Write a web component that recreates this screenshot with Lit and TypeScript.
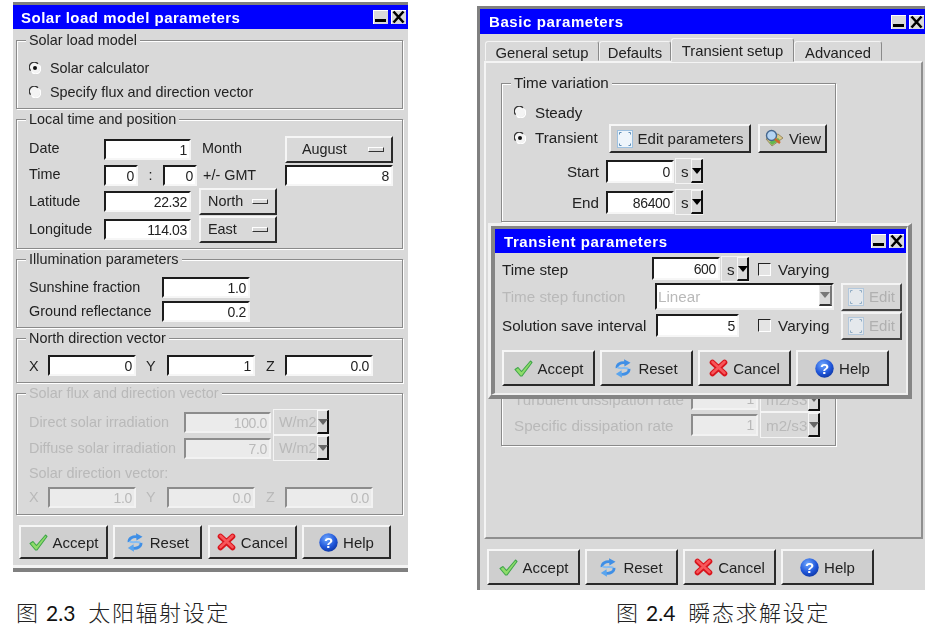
import { LitElement, html, svg, css } from "lit";
import { customElement } from "lit/decorators.js";

const checkIcon = html`<svg class="ico" width="19" height="17" viewBox="0 0 19 17"><path d="M1 9.5 L4 7.5 L7.5 11.5 L16.5 1 L18 2.5 L8 16 L6.5 16 Z" fill="#8fdc6a" stroke="#3fa64a" stroke-width="1.1" stroke-linejoin="round"/></svg>`;
const resetIcon = html`<svg class="ico rs" width="16" height="19" viewBox="0 0 16 19"><g fill="none" stroke-width="2.8"><path d="M2 9 C1.6 5 6 3.2 10 3.8" stroke="#3f8fe6"/><path d="M2.4 8.2 C5 10.4 11 7.8 13.6 10" stroke="#86bdf2" stroke-width="2"/><path d="M14 10 C14.4 14 10 15.8 6 15.2" stroke="#3f8fe6"/></g><path d="M9 0.3 L15.5 3.8 L9.5 7.6 Z" fill="#3f8fe6"/><path d="M7 18.7 L0.8 15 L6.5 11.2 Z" fill="#5aa5ee"/></svg>`;
const cancelIcon = html`<svg class="ico" width="19" height="18" viewBox="0 0 19 18"><g stroke-linecap="round"><path d="M3.5 3.5 L15.5 14.5 M15.5 3.5 L3.5 14.5" stroke="#d8141c" stroke-width="5.6"/><path d="M3.5 3 L15.5 14 M15.5 3 L3.5 14" stroke="#f8565a" stroke-width="2.6"/></g></svg>`;
const helpIcon = html`<svg class="ico" width="19" height="19" viewBox="0 0 19 19"><defs><radialGradient id="hb" cx=".4" cy=".3" r=".8"><stop offset="0" stop-color="#6fa8ff"/><stop offset=".6" stop-color="#1f55d8"/><stop offset="1" stop-color="#0a2f96"/></radialGradient></defs><circle cx="9.5" cy="9.5" r="9.2" fill="url(#hb)"/><text x="9.5" y="15" text-anchor="middle" font-family="Liberation Sans, sans-serif" font-weight="700" font-size="15" fill="#fff">?</text></svg>`;
const pageIcon = html`<svg class="ico" width="16" height="18" viewBox="0 0 16 18"><rect x=".5" y=".5" width="15" height="17" fill="#eef5fb" stroke="#9cc0e0"/><path d="M2.5 2.5h2M2.5 2.5v2M13.5 2.5h-2M13.5 2.5v2M2.5 15.5h2M2.5 15.5v-2M13.5 15.5h-2M13.5 15.5v-2" stroke="#5f8fb8" fill="none"/></svg>`;
const viewIcon = html`<svg class="ico" width="20" height="19" viewBox="0 0 20 19"><path d="M2 10 L14 5 L19 9 L8 17 Z" fill="#d9c88a" stroke="#8a7a50" stroke-width=".8"/><path d="M5 13 L14 9 L16 11 L8 16 Z" fill="#63b84f"/><circle cx="7.5" cy="6.5" r="5" fill="#b5d4f2" stroke="#46688f" stroke-width="1.4"/><path d="M11 10 L16 14" stroke="#d0692a" stroke-width="2.4"/></svg>`;

const radio = (on: boolean) => html`<svg class="radio" width="12" height="12" viewBox="0 0 12 12"><circle cx="6" cy="6" r="5.2" fill="#f4f4f4"/><path d="M1.6 8.6 A5 5 0 0 1 9 1.8" fill="none" stroke="#333" stroke-width="1.3"/><path d="M10.4 3.4 A5 5 0 0 1 3 10.2" fill="none" stroke="#fff" stroke-width="1.3"/>${on ? svg`<circle cx="6" cy="6" r="2" fill="#111"/>` : ""}</svg>`;
const winBtns = html`<div class="ctl"><span class="cb"><svg width="15" height="14" viewBox="0 0 15 14"><rect x="2" y="9" width="11" height="3" fill="#000"/></svg></span><span class="cb"><svg width="15" height="14" viewBox="0 0 15 14"><path d="M2.5 1.5 L12.5 12.5 M12.5 1.5 L2.5 12.5" stroke="#000" stroke-width="2.6"/></svg></span></div>`;
const actionBtns = html`
  <button class="btn">${checkIcon}<span>Accept</span></button>
  <button class="btn">${resetIcon}<span>Reset</span></button>
  <button class="btn">${cancelIcon}<span>Cancel</span></button>
  <button class="btn">${helpIcon}<span>Help</span></button>`;
const opt = (t: string, cls = "") => html`<button class="opt ${cls}"><span>${t}</span><i class="ind"></i></button>`;
const dd = (t: string, cls = "") => html`<div class="dd ${cls}"><span class="ddt">${t}</span><span class="dda"><i></i></span></div>`;
const check = () => html`<div class="chk"><i></i><span>Varying</span></div>`;

@customElement("app-root")
export class AppRoot extends LitElement {
  static styles = css`
    :host { display: block; position: relative; width: 937px; height: 631px; background: #fff; overflow: hidden;
      font: 15px "Liberation Sans", Arial, sans-serif; color: #222; }
    * { box-sizing: border-box; }
    .win { position: absolute; background: #d9d9d9; filter: blur(.35px); }
    .left { left: 13px; top: 2px; width: 395px; height: 570px; border-top: 3px solid #808080; border-bottom: 4px solid #808080; font-size: 14.4px; }
    .left .body { height: 539px; padding: 11px 0 0 3px; border-bottom: 3px solid #f4f4f4; }
    .right { left: 477px; top: 6px; width: 448px; height: 584px; border-top: 3px solid #808080; border-left: 3px solid #808080; font-size: 15.2px; }
    .title { height: 24px; background: #0000ff; color: #fff; font-weight: 700; font-size: 15px; letter-spacing: .5px; display: flex; align-items: center; justify-content: space-between; padding-left: 8px; }
    .right > .title { height: 25px; padding-left: 9px; letter-spacing: .6px; }
    .ctl { display: flex; gap: 3px; padding-right: 2px; }
    .right > .title .ctl { padding-right: 1px; }
    .cb { width: 15px; height: 14px; background: #d9d9d9; display: block; box-shadow: inset 1px 1px 0 #fff; line-height: 0; }
    .cb svg { display: block; }
    .group { position: relative; width: 387px; margin-bottom: 10px; border: 1px solid #8a8a8a; box-shadow: 1px 1px 0 #fff, inset 1px 1px 0 #fff; padding: 15px 0 0 12px; }
    .legend { position: absolute; top: -10px; left: 9px; padding: 0 3px; background: #d9d9d9; line-height: 18px; white-space: nowrap; }
    .g1 { height: 69px; }
    .g2 { height: 130px; }
    .g3 { height: 69px; }
    .g4 { height: 45px; padding-top: 16px; }
    .g5 { height: 122px; }
    .off { color: #b9b9b9; }
    .row { display: flex; align-items: center; gap: 9px; height: 24px; white-space: nowrap; }
    .grid { display: grid; align-items: center; white-space: nowrap; }
    .g2 .grid { grid-template-columns: 74.5px 34.5px 25px 34px 2px 78px 8px 108px; grid-template-rows: 28px 24px 28px 28px; }
    .g3 .grid { grid-template-columns: 133px 88px; grid-template-rows: 24px 24px; }
    .xyz { grid-template-columns: 19px 88px 31px 88px 30px 88px; }
    .g5 .top { grid-template-columns: 155px 87px 2px 57px; grid-template-rows: 26px 26px; }
    .g5 .lbl { height: 24px; line-height: 24px; }
    .g5 .xyz { height: 24px; }
    .s3 { grid-column: span 3; }
    .s2 { grid-column: span 2; }
    .s3 .in { width: 87.5px; }
    .colon { text-align: center; }
    .pl5 { padding-left: 5px; }
    .pl6 { padding-left: 6px; }
    .pl10 { padding-left: 10px; }
    .pl11 { padding-left: 11px; }
    .up { position: relative; top: -1px; }
    .in { height: 21px; background: #fff; border: 2px solid; border-color: #1c1c1c #f6f6f6 #f6f6f6 #1c1c1c; text-align: right; padding-right: 2px; line-height: 18px; font-size: 14px; letter-spacing: -.35px; }
    .in.dis { background: #ebebeb; color: #b9b9b9; border-color: #8c8c8c #f2f2f2 #f2f2f2 #8c8c8c; }
    .opt, .btn { font: inherit; color: inherit; background: #d0d0d0; border: 2px solid; border-color: #f6f6f6 #2a2a2a #2a2a2a #f6f6f6; padding: 0; display: flex; align-items: center; white-space: nowrap; }
    .opt { height: 27px; width: 100%; justify-content: space-between; padding: 0 7px 0 7px; background: #d9d9d9; }
    .opt.wide { padding-left: 15px; height: 27px; }
    .ind { width: 16px; height: 5px; background: #d9d9d9; border: 1px solid; border-color: #fff #333 #333 #fff; display: block; }
    .btn { height: 34px; width: 89px; justify-content: center; gap: 5px; background: #cfcfcf; font-size: 15px; }
    .actions { display: flex; gap: 5.33px; margin: 9px 0 0 3px; }
    .ico { display: block; flex: none; }
    .rs { margin-right: 2px; }
    .radio { display: block; flex: none; }
    .dd { display: flex; height: 26px; background: #d9d9d9; border: 1px solid; border-color: #f4f4f4 transparent #f4f4f4 #f4f4f4; align-items: center; }
    .ddt { flex: 1; padding-left: 5px; }
    .dda { width: 12px; height: 24px; background: #d9d9d9; border: 1px solid; border-color: #f6f6f6 #111 #111 #f6f6f6; border-width: 1px 2px 2px 1px; display: flex; align-items: center; justify-content: center; flex: none; }
    .dda i { display: block; width: 0; height: 0; border: 5px solid transparent; border-top: 6px solid #000; border-bottom: 0; }
    .dd.dis { color: #b9b9b9; }
    .dd.dis .dda i { border-top-color: #666; }
    .tabs { display: flex; align-items: flex-end; height: 27px; padding-left: 5px; position: relative; z-index: 1; }
    .tab { height: 20px; padding-top: 2px; border: 1px solid; border-color: #f4f4f4 #8a8a8a transparent #f4f4f4; border-radius: 3px 3px 0 0; text-align: center; background: #d9d9d9; line-height: 18px; margin-bottom: 0; font-size: 14.8px; }
    .t1 { width: 114px; } .t2 { width: 72px; } .t4 { width: 88px; }
    .t3 { width: 123px; height: 24px; line-height: 20px; margin-bottom: -1px; border-bottom-color: #d9d9d9; }
    .panel { width: 439px; height: 478px; margin-left: 4px; border: 2px solid; border-color: #f4f4f4 #8f8f8f #8f8f8f #f4f4f4; padding: 20px 0 0 15px; }
    .p-group { width: 335px; }
    .tv { height: 139px; padding-top: 16px; margin-bottom: 10px; }
    .radline { display: flex; align-items: center; gap: 9px; }
    .tvrow { display: flex; align-items: center; height: 24px; }
    .tv2 { height: 29px; }
    .tv2 .radline { width: 95px; position: relative; top: -1px; }
    .tv2 .btn { height: 29px; }
    .right .edit { width: 142px; margin-right: 7px; }
    .right .vw { width: 69px; }
    .se { display: grid; grid-template-columns: 85px 7px 68px 1px 29px; align-items: center; height: 26px; }
    .se .lb { text-align: right; grid-column: 1; }
    .se .in { grid-column: 3; height: 23px; line-height: 20px; }
    .se .dd { grid-column: 5; }
    .m5 { margin-top: 5px; }
    .tv3 { height: 214px; padding-top: 153px; }
    .disrow { display: grid; grid-template-columns: 177px 67px 2px 61px; height: 26px; align-items: center; white-space: nowrap; }
    .disrow .in { height: 22px; line-height: 18px; }
    .big { margin: 10px 0 0 7px; gap: 5px; }
    .big .btn { width: 93px; height: 36px; }
    .dialog { position: absolute; left: 488px; top: 223px; width: 424px; height: 176px; border: solid; border-width: 3px 4px 4px 3px; border-color: #f0f0f0 #858585 #858585 #f0f0f0; background: #d9d9d9; filter: blur(.35px); font-size: 15.2px; }
    .dlg-in { height: 169px; border-style: solid; border-width: 3px 2px 2px 4px; border-color: #858585 #f0f0f0 #f0f0f0 #858585; }
    .dlg-in .title { height: 24px; padding-left: 9px; letter-spacing: .6px; }
    .dlg-body { height: 140px; padding: 3px 0 0 7px; }
    .dlg-grid { display: grid; grid-template-columns: 150px 106px 83px 61px; grid-template-rows: 26px 29px 29px; align-items: center; white-space: nowrap; }
    .ts { display: flex; gap: 1px; }
    .ts .in { width: 68px; height: 23px; line-height: 20px; margin-top: 1px; }
    .ts .dd { width: 29px; }
    .chk { display: flex; align-items: center; gap: 7px; }
    .chk span { letter-spacing: .2px; }
    .chk i { display: block; width: 13px; height: 13px; background: #e4e4e4; border: 1px solid; border-color: #222 #fff #fff #222; }
    .combo { grid-column: span 2; margin-left: 3px; width: 179px; height: 27px; background: #fff; border: 2px solid; border-color: #1c1c1c #eee #eee #1c1c1c; color: #b9b9b9; display: flex; justify-content: space-between; align-items: center; padding-left: 1px; }
    .combo .dda { height: 21px; width: 13px; align-self: flex-start; border-color: #e8e8e8 #777 #333 #e8e8e8; background: #d9d9d9; }
    .combo .dda i { border-top-color: #777; }
    .dialog .edbtn { width: 61px; height: 28px; color: #b0b0b0; background: #d6d6d6; gap: 5px; border-color: #f4f4f4 #444 #444 #f4f4f4; }
    .edbtn .ico { opacity: .6; }
    .in-5 { margin-left: 4px; width: 83px; height: 23px; line-height: 20px; }
    .dlg-act { margin: 10px 0 0 0; gap: 5px; }
    .dlg-act .btn { width: 93px; height: 36px; }
    .cap { position: absolute; top: 596px; font: 22px "Noto Sans CJK SC", sans-serif; font-weight: 300; color: #222; line-height: 30px; white-space: pre; letter-spacing: 1.6px; }
    .cap b { font: 400 21px Lato, sans-serif; letter-spacing: 0; color: #111; }
    .c1 { left: 16px; } .c2 { left: 616px; }
  `;

  render() {
    return html`
      <section class="win left">
        <div class="title"><span>Solar load model parameters</span>${winBtns}</div>
        <div class="body">
          <div class="group g1"><div class="legend">Solar load model</div>
            <div class="row">${radio(true)}<span>Solar calculator</span></div>
            <div class="row">${radio(false)}<span>Specify flux and direction vector</span></div>
          </div>
          <div class="group g2"><div class="legend">Local time and position</div>
            <div class="grid">
              <span class="up">Date</span><div class="s3"><div class="in">1</div></div><span class="s2 pl5 up">Month</span><span></span><div>${opt("August", "wide")}</div>
              <span class="up">Time</span><div class="in">0</div><span class="colon">:</span><div class="in">0</div><span class="s2 pl6">+/- GMT</span><span></span><div class="in">8</div>
              <span>Latitude</span><div class="s3"><div class="in">22.32</div></div><span></span><div>${opt("North")}</div><span></span><span></span>
              <span>Longitude</span><div class="s3"><div class="in">114.03</div></div><span></span><div>${opt("East")}</div>
            </div>
          </div>
          <div class="group g3"><div class="legend">Illumination parameters</div>
            <div class="grid">
              <span>Sunshine fraction</span><div class="in">1.0</div>
              <span>Ground reflectance</span><div class="in">0.2</div>
            </div>
          </div>
          <div class="group g4"><div class="legend">North direction vector</div>
            <div class="grid xyz">
              <span>X</span><div class="in">0</div><span class="pl10">Y</span><div class="in">1</div><span class="pl11">Z</span><div class="in">0.0</div>
            </div>
          </div>
          <div class="group g5 off"><div class="legend">Solar flux and direction vector</div>
            <div class="grid top">
              <span>Direct solar irradiation</span><div class="in dis">100.0</div><span></span>${dd("W/m2", "dis")}
              <span>Diffuse solar irradiation</span><div class="in dis">7.0</div><span></span>${dd("W/m2", "dis")}
            </div>
            <div class="lbl">Solar direction vector:</div>
            <div class="grid xyz">
              <span>X</span><div class="in dis">1.0</div><span class="pl10">Y</span><div class="in dis">0.0</div><span class="pl11">Z</span><div class="in dis">0.0</div>
            </div>
          </div>
          <div class="actions">${actionBtns}</div>
        </div>
      </section>

      <section class="win right">
        <div class="title"><span>Basic parameters</span>${winBtns}</div>
        <div class="tabs">
          <div class="tab t1">General setup</div><div class="tab t2">Defaults</div><div class="tab t3">Transient setup</div><div class="tab t4">Advanced</div>
        </div>
        <div class="panel">
          <div class="group p-group tv"><div class="legend">Time variation</div>
            <div class="tvrow"><div class="radline">${radio(false)}<span>Steady</span></div></div>
            <div class="tvrow tv2"><div class="radline">${radio(true)}<span>Transient</span></div>
              <button class="btn edit">${pageIcon}<span>Edit parameters</span></button>
              <button class="btn vw">${viewIcon}<span>View</span></button>
            </div>
            <div class="se m5"><span class="lb">Start</span><div class="in">0</div>${dd("s")}</div>
            <div class="se m5"><span class="lb">End</span><div class="in">86400</div>${dd("s")}</div>
          </div>
          <div class="group p-group tv3 off">
            <div class="disrow"><span>Turbulent dissipation rate</span><div class="in dis">1</div><span></span>${dd("m2/s3", "dis")}</div>
            <div class="disrow"><span>Specific dissipation rate</span><div class="in dis">1</div><span></span>${dd("m2/s3", "dis")}</div>
          </div>
        </div>
        <div class="actions big">${actionBtns}</div>
      </section>

      <section class="dialog">
        <div class="dlg-in">
          <div class="title"><span>Transient parameters</span>${winBtns}</div>
          <div class="dlg-body">
            <div class="dlg-grid">
              <span>Time step</span><div class="ts"><div class="in">600</div>${dd("s")}</div>${check()}<span></span>
              <span class="off">Time step function</span><div class="combo"><span>Linear</span><span class="dda"><i></i></span></div><button class="btn edbtn">${pageIcon}<span>Edit</span></button>
              <span>Solution save interval</span><div class="in in-5">5</div>${check()}<button class="btn edbtn">${pageIcon}<span>Edit</span></button>
            </div>
            <div class="actions dlg-act">${actionBtns}</div>
          </div>
        </div>
      </section>

      <div class="cap c1">图 <b>2.3</b>  太阳辐射设定</div>
      <div class="cap c2">图 <b>2.4</b>  瞬态求解设定</div>
    `;
  }
}
